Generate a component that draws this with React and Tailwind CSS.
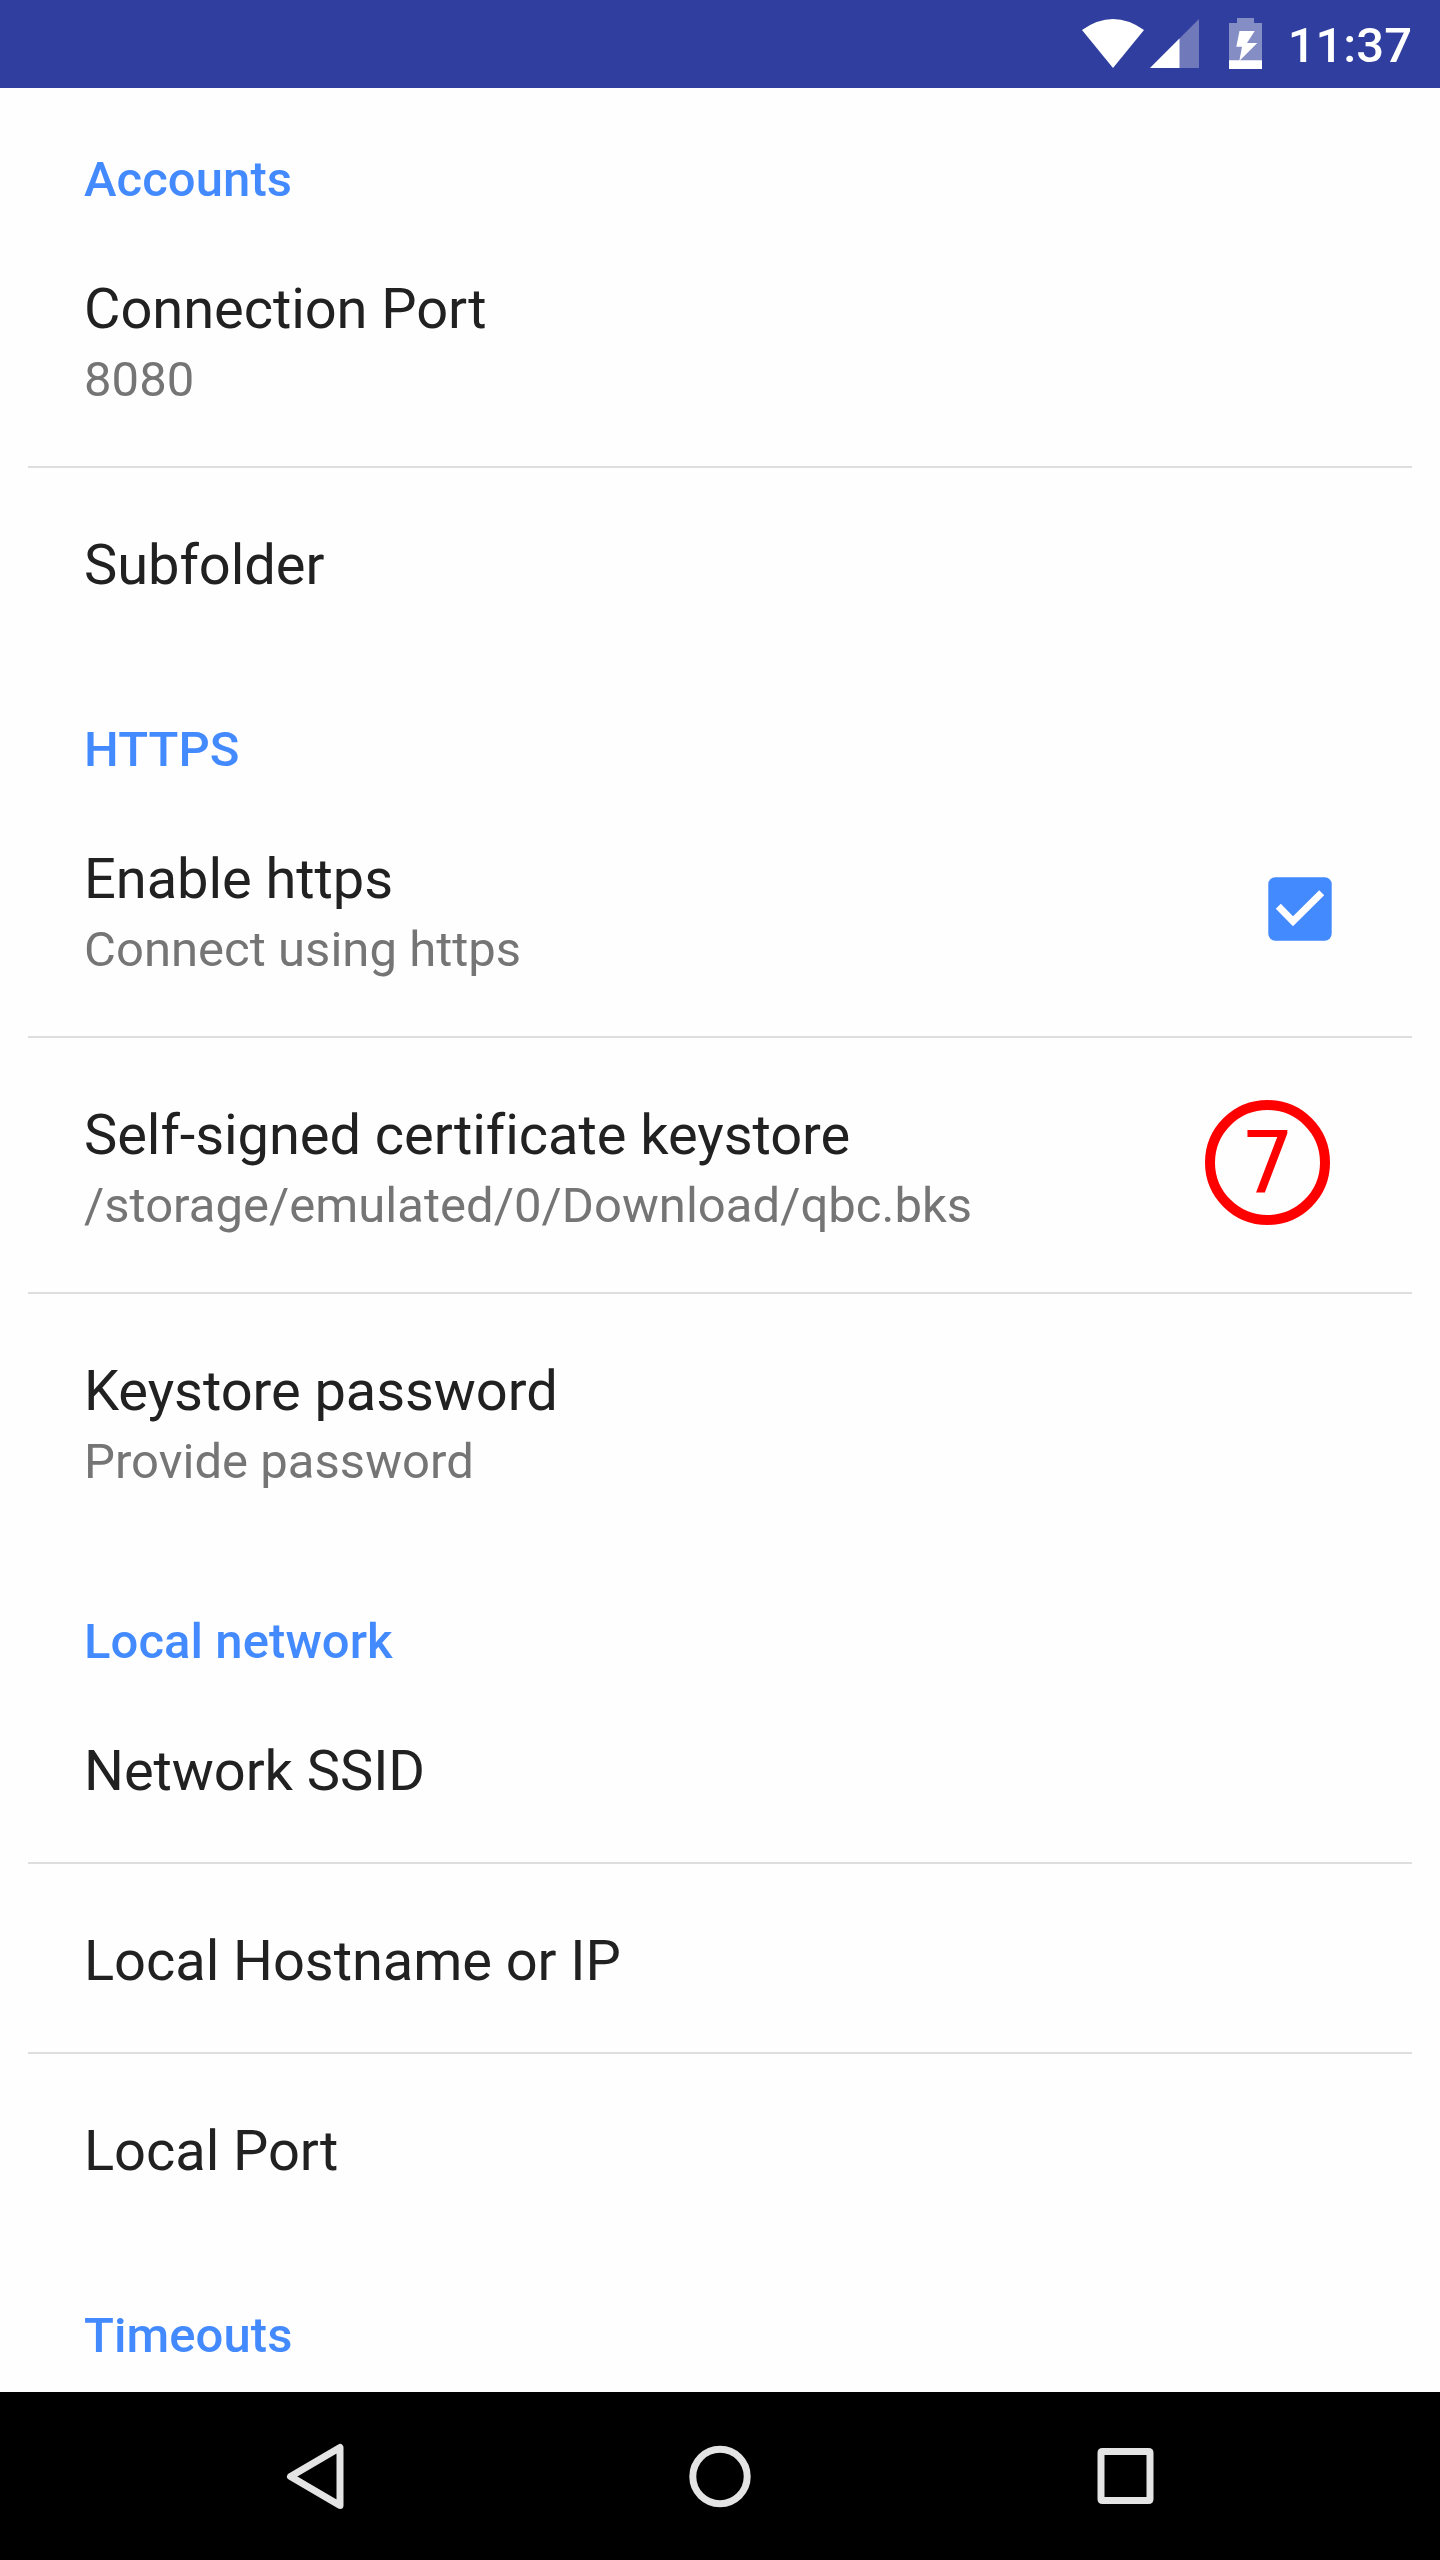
const Header = ({ children }) => (
  <div className="h-[152px] pt-[64px] pl-[84px] text-[49px] leading-[56px] tracking-[0.07px] font-medium text-[#448aff]">{children}</div>
);

const Item = ({ title, sub, cls, line, children }) => (
  <div className={`mx-7 pl-14 pr-[80px] flex items-start justify-between ${cls} ${line ? "border-b-2 border-[#dedede]" : ""}`}>
    <div>
      <div className="text-[56px] leading-[66px] tracking-[-0.06px] text-[#212121]">{title}</div>
      {sub && <div className="text-[49px] leading-[65px] tracking-[0.03px] mt-[5px] text-[#757575]">{sub}</div>}
    </div>
    {children}
  </div>
);

export default function App() {
  return (
    <div className="w-[1440px] h-[2560px] overflow-hidden bg-[#fefefe] font-['Roboto',sans-serif] flex flex-col whitespace-nowrap">
      <div className="h-[88px] shrink-0 bg-[#303f9f] text-white flex items-center justify-end pr-[28px]">
        <svg width="200" height="88" viewBox="1080 0 200 88">
          <path d="M1082 30Q1113 8 1144 30L1113 68Z" fill="#fff" />
          <path d="M1199 19V68H1150Z" fill="#7079b9" />
          <path d="M1179.5 38.5V68H1150Z" fill="#fff" />
          <path d="M1229 23H1237V18H1254V23H1262V61H1229Z" fill="#858dc5" />
          <path d="M1229 60.3H1262V69H1229Z" fill="#fff" />
          <path d="M1239.5 31H1254.7L1247 43H1257.3L1239.3 61L1242 46.7H1236.3Z" fill="#fff" />
        </svg>
        <span className="text-[49px] font-medium ml-[8px] pt-[4px]">11:37</span>
      </div>

      <div className="h-[2304px] shrink-0 overflow-hidden">
        <Header>Accounts</Header>
        <Item title="Connection Port" sub="8080" cls="h-[228px] pt-[36px]" line />
        <Item title="Subfolder" cls="h-[190px] pt-[64px]" />
        <Header>HTTPS</Header>
        <Item title="Enable https" sub="Connect using https" cls="h-[228px] pt-[36px]" line>
          <svg className="mt-[31px]" width="64" height="64" viewBox="0 0 64 64">
            <rect x=".3" y=".3" width="63.4" height="63.4" rx="7" fill="#448aff" />
            <path d="M10.3 29.3L25 44.3L53.7 15.7" fill="none" stroke="#fff" strokeWidth="7" />
          </svg>
        </Item>
        <Item title="Self-signed certificate keystore" sub="/storage/emulated/0/Download/qbc.bks" cls="h-[256px] pt-[64px]" line>
          <div className="w-[125px] h-[125px] mt-[-2px] mr-[2px] rounded-full border-10 border-[#f00] text-[#f00] font-['DejaVu_Sans',sans-serif] text-[85px] leading-none flex items-center justify-center">7</div>
        </Item>
        <Item title="Keystore password" sub="Provide password" cls="h-[256px] pt-[64px]" />
        <Header>Local network</Header>
        <Item title="Network SSID" cls="h-[162px] pt-[36px]" line />
        <Item title="Local Hostname or IP" cls="h-[190px] pt-[64px]" line />
        <Item title="Local Port" cls="h-[190px] pt-[64px]" />
        <Header>Timeouts</Header>
      </div>

      <div className="h-[168px] bg-black shrink-0 flex items-center pl-[283px] gap-[341px]">
        <svg width="64" height="80" viewBox="0 0 64 80" fill="none" stroke="#e4e4e4" strokeWidth="7" strokeLinejoin="round">
          <path d="M7.5 40.5L57 11.5V69.5Z" />
        </svg>
        <svg width="64" height="80" viewBox="0 0 64 80" fill="none" stroke="#e4e4e4" strokeWidth="7">
          <circle cx="32" cy="40.5" r="27.2" />
        </svg>
        <svg width="64" height="80" viewBox="0 0 64 80">
          <path fill="#e4e4e4" fillRule="evenodd" d="M9.5 12H55.5Q60.5 12 60.5 17V63Q60.5 68 55.5 68H9.5Q4.5 68 4.5 63V17Q4.5 12 9.5 12ZM11.5 19V61H53.5V19Z" />
        </svg>
      </div>
    </div>
  );
}
